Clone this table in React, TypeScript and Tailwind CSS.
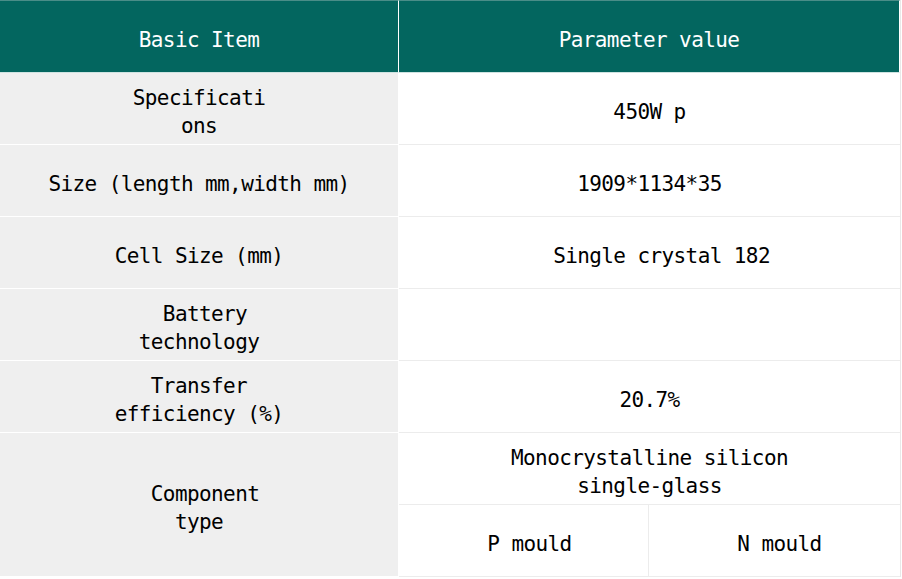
const ROWS = [
  { label: ['Specificati', 'ons'], value: ['450W p'] },
  { label: ['Size (length mm,width mm)'], value: ['1909*1134*35'] },
  { label: ['Cell Size (mm)'], value: ['\u00a0\u00a0Single crystal 182'] },
  { label: ['\u00a0Battery', 'technology'], value: [] },
  { label: ['Transfer', 'efficiency (%)'], value: ['20.7%'] },
]

function Lines({ lines }: { lines: string[] }) {
  return (
    <>
      {lines.map((line, i) => (
        <span key={i} className="block whitespace-pre">
          {line}
        </span>
      ))}
    </>
  )
}

export default function App() {
  return (
    <div className="min-h-screen bg-white">
      <div className="grid w-[901px] grid-cols-[399px_250px_251px] border-r border-[#e8e8e8] font-['DejaVu_Sans_Mono',monospace] text-[21px] leading-[28px] tracking-[-0.6px] text-black">
        {/* header */}
        <div className="flex h-[73px] items-center justify-center border-t border-r border-b border-t-[#4a8d88] border-r-white border-b-[#cfe3e1] bg-[#03665f] pt-[6px] text-white">
          Basic Item
        </div>
        <div className="col-span-2 flex h-[73px] items-center justify-center border-t border-r border-b border-t-[#4a8d88] border-r-white border-b-[#cfe3e1] bg-[#03665f] pt-[6px] text-white">
          Parameter value
        </div>

        {ROWS.map((row, i) => (
          <div key={i} className="contents">
            <div className="flex h-[72px] flex-col items-center justify-center border-r border-b border-white bg-[#efefef] pt-[6px] text-center">
              <Lines lines={row.label} />
            </div>
            <div className="col-span-2 flex h-[72px] flex-col items-center justify-center border-b border-[#ececec] bg-white pt-[6px] text-center">
              <Lines lines={row.value} />
            </div>
          </div>
        ))}

        {/* component type */}
        <div className="row-span-2 flex h-[144px] flex-col items-center justify-center border-r border-b border-white bg-[#efefef] pt-[6px] text-center">
          <Lines lines={['\u00a0Component', 'type']} />
        </div>
        <div className="col-span-2 flex h-[72px] flex-col items-center justify-center border-b border-[#ececec] bg-white pt-[6px] text-center">
          <Lines lines={['Monocrystalline silicon', 'single-glass']} />
        </div>
        <div className="flex h-[72px] items-center justify-center border-r border-b border-[#ececec] bg-white pt-[6px] pl-[12px]">
          P mould
        </div>
        <div className="flex h-[72px] items-center justify-center border-b border-[#ececec] bg-white pt-[6px] pl-[10px]">
          N mould
        </div>
      </div>
    </div>
  )
}
